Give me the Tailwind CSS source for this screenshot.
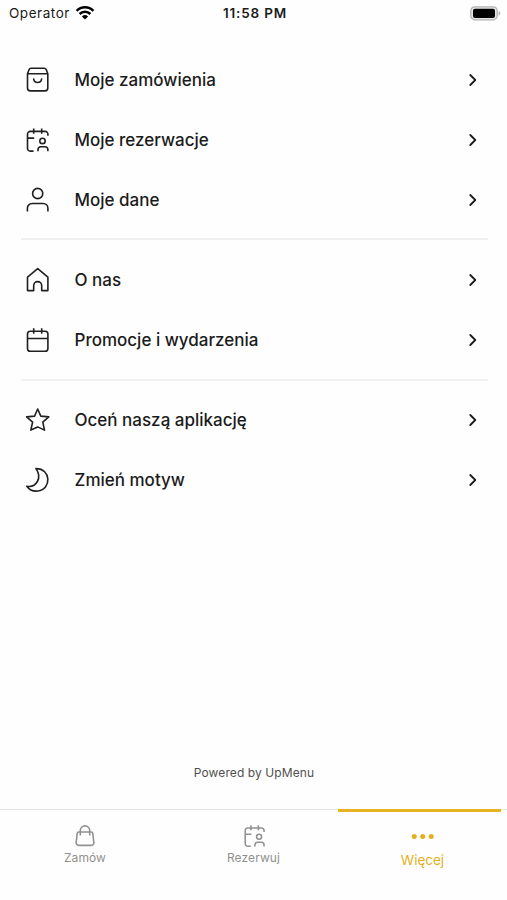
<!DOCTYPE html>
<html lang="pl">
<head>
<meta charset="utf-8">
<title>Więcej</title>
<script src="https://cdn.jsdelivr.net/npm/@tailwindcss/browser@4"></script>
</head>
<body class="bg-[#fefefe]">
<svg class="hidden">
  <symbol id="chev" viewBox="0 0 10 14"><path d="M2.300 2 7.300 7 2.300 12" fill="none" stroke="currentColor" stroke-width="1.800" stroke-linecap="round" stroke-linejoin="round"/></symbol>
  <symbol id="booking" viewBox="0 0 26 26"><path d="M9.500 24.100H6.200a2.700 2.700 0 0 1-2.700-2.700V7.100a2.700 2.700 0 0 1 2.700-2.700h15a2.700 2.700 0 0 1 2.700 2.700v1.700M9.700 1.400v5.400M17.700 1.400v5.400M3.500 11.100h6.700M14 24.300v-1.500a3 3 0 0 1 3-3h3.900a3 3 0 0 1 3 3v1.500"/><circle cx="18.500" cy="13.900" r="2.700"/></symbol>
</svg>
<div class="flex h-[900px] w-[507px] flex-col overflow-hidden font-['Inter','Liberation_Sans',sans-serif] text-[#1b1b1b]">
  <header class="grid h-[28px] shrink-0 grid-cols-3 items-center pl-[9px] pr-[6px] text-[13.5px]">
    <div class="flex items-center gap-[5px]"><span class="-mt-[1px] tracking-[0.55px]">Operator</span>
      <svg class="-mt-[3px] h-[15px] w-[20px] text-black" viewBox="0 0 20 15" fill="none" stroke="currentColor" stroke-width="2.500"><path d="M1.600 5.800a11.800 11.800 0 0 1 16.800 0M4.600 9a7.700 7.700 0 0 1 10.800 0"/><path d="M10 14.500 6.900 11.400a4.500 4.500 0 0 1 6.200 0Z" fill="currentColor" stroke="none"/></svg>
    </div>
    <span class="-mt-[1px] text-center font-semibold tracking-[0.8px]">11:58 PM</span>
    <svg class="-mt-[1px] h-[15px] w-[31px] justify-self-end" viewBox="0 0 31 15"><rect x=".8" y=".8" width="26.400" height="13" rx="4" fill="#e6e6e6" stroke="#b2b2b2" stroke-width="1.300"/><rect x="3" y="2.700" width="22" height="9.300" rx="2" fill="#000"/><path d="M28.600 5v4.600c2.300-.6 2.300-4 0-4.600Z" fill="#b2b2b2"/></svg>
  </header>

  <main class="flex flex-1 flex-col px-[21px] pt-[22px] text-[17px] font-medium [&_li]:flex [&_li]:h-[60px] [&_li]:items-center [&_li]:pl-[3px] [&_li]:pr-[8px] [&_li>span]:pt-[2px] [&_li>svg:first-child]:mr-[24.5px] [&_li>svg:first-child]:size-[26px] [&_li>svg:first-child]:fill-none [&_li>svg:first-child]:stroke-[#202020] [&_li>svg:first-child]:stroke-[1.6] [&_li>svg:last-child]:ml-auto [&_li>svg:last-child]:h-[14px] [&_li>svg:last-child]:w-[10px]">
    <ul>
      <li><svg viewBox="0 0 26 26" stroke-linejoin="round" stroke-linecap="round"><path d="m3.500 6.700 1.600-4.200q.5-1.300 1.900-1.300h13.300q1.400 0 1.900 1.300l1.600 4.200v14.400a2.800 2.800 0 0 1-2.800 2.800H6.300a2.800 2.800 0 0 1-2.800-2.800ZM3.500 6.700h20.300M9.700 12.100c.6 4.500 7.300 4.500 7.900 0"/></svg><span>Moje zamówienia</span><svg><use href="#chev"/></svg></li>
      <li><svg><use href="#booking"/></svg><span>Moje rezerwacje</span><svg><use href="#chev"/></svg></li>
      <li><svg viewBox="0 0 26 26"><circle cx="13.700" cy="6.500" r="5.100"/><path d="M3.400 24.400v-3.200a4.700 4.700 0 0 1 4.700-4.700h11.100a4.700 4.700 0 0 1 4.700 4.700v3.200"/></svg><span>Moje dane</span><svg><use href="#chev"/></svg></li>
    </ul>
    <hr class="mr-[-2px] mb-[10px] mt-[8px] border-t-2 border-[#f0f0f0]">
    <ul>
      <li><svg viewBox="0 0 26 26" stroke-linejoin="round"><path d="M3.500 23.600V10.100L13.700 1.600l10.200 8.500v13.500h-6.200v-5a4 4 0 0 0-8 0v5Z"/></svg><span>O nas</span><svg><use href="#chev"/></svg></li>
      <li><svg viewBox="0 0 26 26"><rect x="3.500" y="4.300" width="20.400" height="19.900" rx="2.800"/><path d="M3.500 11.500h20.400M9.700 1.300v5.500M17.700 1.300v5.500"/></svg><span>Promocje i wydarzenia</span><svg><use href="#chev"/></svg></li>
    </ul>
    <hr class="my-[9px] mr-[-2px] border-t-2 border-[#f0f0f0]">
    <ul>
      <li><svg viewBox="0 0 26 26" stroke-linejoin="round"><path d="m13.700 2 3.100 7.100 8 .8-6 5.300 1.700 7.900-6.800-3.200-6.900 3.200 1.800-7.900-6-5.300 8-.8Z"/></svg><span>Oceń naszą aplikację</span><svg><use href="#chev"/></svg></li>
      <li><svg viewBox="0 0 26 26" stroke-linejoin="round"><path d="M11.900 1.600c15.300-.2 15.900 20.600 2 22.400-5 .6-9-1.800-11.100-4.800C12.200 21 18.600 10.700 11.900 1.600Z"/></svg><span>Zmień motyw</span><svg><use href="#chev"/></svg></li>
    </ul>
    <p class="mt-auto mb-[27px] ml-[1px] text-center text-[12px] leading-[18px] font-normal tracking-[0.090px] text-[#505050]">Powered by UpMenu</p>
  </main>

  <nav class="grid h-[91px] shrink-0 grid-cols-3 border-t border-[#e4e4e4] text-[12px] text-[#919191]">
    <div class="flex flex-col items-center pt-[14px]">
      <svg class="ml-[1px] h-[24px] w-[22px]" viewBox="0 0 22 24" fill="none" stroke="currentColor" stroke-width="1.600"><path d="M4.700 8h12.600q1.300 0 1.500 1.300l1 9.200a2.500 2.500 0 0 1-2.500 2.900H4.700a2.500 2.500 0 0 1-2.500-2.900l1-9.200Q3.400 8 4.700 8M6.300 11.500V6.600a4.700 4.700 0 0 1 9.400 0v4.900"/></svg>
      <span class="ml-[1px] mt-[1px] leading-[18px] tracking-[0.1px]">Zamów</span>
    </div>
    <div class="flex flex-col items-center pt-[14px]">
      <svg class="h-[24px] w-[24px]" fill="none" stroke="currentColor" stroke-width="1.700"><use href="#booking"/></svg>
      <span class="mt-[1px] leading-[18px] tracking-[0.1px]">Rezerwuj</span>
    </div>
    <div class="-mt-px mr-[6px] flex flex-col items-center border-t-[3px] border-[#e7b321] pt-[21px] text-[#e2b01f]">
      <svg class="ml-[6px] h-[7px] w-[24px]" viewBox="0 0 24 7" fill="currentColor"><circle cx="3.200" cy="3.500" r="2.500"/><circle cx="11.700" cy="3.500" r="2.500"/><circle cx="20.200" cy="3.500" r="2.500"/></svg>
      <span class="ml-[6px] mt-[10px] text-[13.5px] leading-[20px]">Więcej</span>
    </div>
  </nav>
</div>
</body>
</html>
